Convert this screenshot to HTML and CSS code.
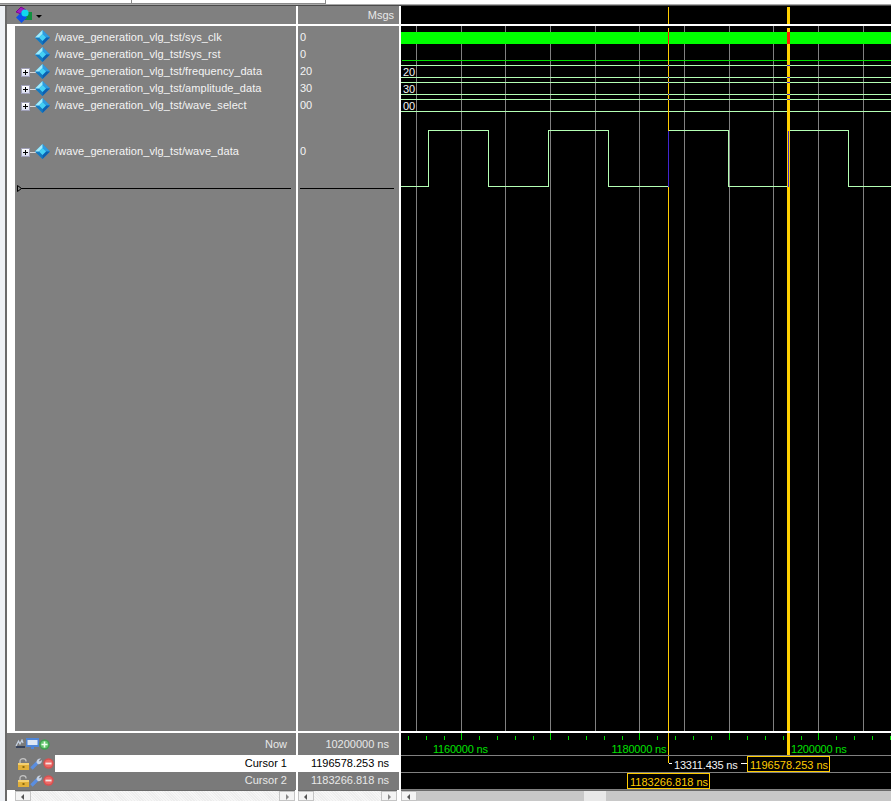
FILE: index.html
```html
<!DOCTYPE html>
<html lang="en">
<head>
<meta charset="utf-8">
<title>Wave</title>
<link rel="stylesheet" href="styles.css">
</head>
<body>
<svg class="defs" width="0" height="0" aria-hidden="true">
  <defs>
    <symbol id="sig" viewBox="0 0 15 15">
      <path d="M7.500 0L15 7.500 7.500 15 0 7.500z" fill="#1a8fd8"/>
      <path d="M7.500 0L15 7.500H11L7.500 4z" fill="#2f9ae0"/>
      <path d="M0 7.500L7.500 15V11L4 7.500z" fill="#1479c0"/>
      <path d="M7.500 15L15 7.500H11L7.500 11z" fill="#0d5fb0"/>
      <path d="M7.500 0L0 7.500H4L7.500 4z" fill="#a0ecfc"/>
      <path d="M7.500 4L11 7.500 7.500 11 4 7.500z" fill="#45d0f4"/>
    </symbol>
    <symbol id="lock" viewBox="0 0 11 12">
      <path d="M2 5V3C2 1.500 3.500 .7 5 .7S8 1.500 8 3V3.500" fill="none" stroke="#c4c4c4" stroke-width="1.300"/>
      <rect x="0" y="5" width="11" height="7" fill="#e2b038"/>
      <rect x="0" y="5" width="11" height="2" fill="#f4d070"/>
      <rect x="4.500" y="8" width="2" height="2" fill="#8a6a10"/>
    </symbol>
    <symbol id="wrench" viewBox="0 0 12 12">
      <path d="M1.500 10.500L7.500 4.500" stroke="#5a8ee0" stroke-width="3.200" fill="none"/>
      <path d="M6.500 4.500C6.300 2 8.500 0 11 .6L9 2.600 9.800 3.600 11.800 2C12.200 5 10 6.800 7.800 6z" fill="#c4d0e2"/>
    </symbol>
    <symbol id="minus" viewBox="0 0 11 11">
      <circle cx="5.500" cy="5.500" r="5.200" fill="#d95050"/>
      <circle cx="5.500" cy="5.500" r="3.800" fill="#ec6a66"/>
      <rect x="2.500" y="4.600" width="6" height="1.800" fill="#f8e4e4"/>
    </symbol>
  </defs>
</svg>

<div class="app">
  <div class="tabs">
    <div class="tab tab-a"></div>
    <div class="tab tab-b"></div>
    <div class="tab tab-c"></div>
  </div>
  <div class="panes">
    <section class="col col-names">
      <div class="head">
        <svg class="head-icon" width="18" height="18" viewBox="0 0 18 18">
          <path d="M1 6L6 1l5 3-5 4z" fill="#a020c0" stroke="#800090"/>
          <rect x="8" y="6" width="9" height="8" fill="#109040"/>
          <path d="M6.500 6L12 11.500 6.500 17 1 11.500z" fill="#1050e8"/>
          <circle cx="10" cy="7" r="3.600" fill="#10d8f0"/>
        </svg>
        <span class="caret"></span>
      </div>
      <div class="list">
        <div class="gutter"></div>
        <div class="rows">
          <div class="row"><svg class="sig"><use href="#sig"/></svg><span class="name">/wave_generation_vlg_tst/sys_clk</span></div>
          <div class="row"><svg class="sig"><use href="#sig"/></svg><span class="name">/wave_generation_vlg_tst/sys_rst</span></div>
          <div class="row"><span class="exp"><span class="conn"></span></span><svg class="sig"><use href="#sig"/></svg><span class="name">/wave_generation_vlg_tst/frequency_data</span></div>
          <div class="row"><span class="exp"><span class="conn"></span></span><svg class="sig"><use href="#sig"/></svg><span class="name">/wave_generation_vlg_tst/amplitude_data</span></div>
          <div class="row"><span class="exp"><span class="conn"></span></span><svg class="sig"><use href="#sig"/></svg><span class="name">/wave_generation_vlg_tst/wave_select</span></div>
          <div class="row row-tall"><span class="exp"><span class="conn"></span></span><svg class="sig"><use href="#sig"/></svg><span class="name">/wave_generation_vlg_tst/wave_data</span></div>
          <div class="sep sep-names"><svg class="tri" width="5" height="7" viewBox="0 0 5 7"><path d="M.5 .5L4.500 3.500 .5 6.500z" fill="#808080" stroke="#000"/></svg></div>
        </div>
      </div>
      <div class="foot">
        <div class="foot-row now">
          <span class="now-icons">
            <svg width="11" height="10" viewBox="0 0 11 10"><path d="M1 8H10" stroke="#203050" stroke-width="1.500"/><path d="M1 7L3.500 2 5 5 7 1 8 4" fill="none" stroke="#c8d4e4" stroke-width="1.200"/></svg>
            <svg width="13" height="12" viewBox="0 0 13 12"><rect width="13" height="9" fill="#4f86d8"/><rect x="1.500" y="2" width="10" height="5" fill="#dfe8f4"/><rect x="5" y="9" width="3" height="2" fill="#4f86d8"/></svg>
            <svg width="11" height="11" viewBox="0 0 11 11"><circle cx="5.500" cy="5.500" r="5.200" fill="#3fa050"/><circle cx="5.500" cy="5.500" r="3.800" fill="#66c870"/><path d="M5.500 2.500V8.500M2.500 5.500H8.500" stroke="#f0fff0" stroke-width="1.600"/></svg>
          </span>
          <span class="foot-label">Now</span>
        </div>
        <div class="foot-row cur">
          <span class="cur-icons"><svg class="i-lock"><use href="#lock"/></svg><svg class="i-wrench"><use href="#wrench"/></svg><svg class="i-minus"><use href="#minus"/></svg></span>
          <span class="foot-label selected">Cursor 1</span>
        </div>
        <div class="foot-row cur">
          <span class="cur-icons"><svg class="i-lock"><use href="#lock"/></svg><svg class="i-wrench"><use href="#wrench"/></svg><svg class="i-minus"><use href="#minus"/></svg></span>
          <span class="foot-label">Cursor 2</span>
        </div>
      </div>
      <div class="scroll scroll-names"><span class="btn btn-l"></span><span class="track"></span><span class="btn btn-r"></span></div>
    </section>

    <section class="col col-msgs">
      <div class="head head-msgs">Msgs</div>
      <div class="list">
        <div class="rows">
          <div class="row val">0</div>
          <div class="row val">0</div>
          <div class="row val">20</div>
          <div class="row val">30</div>
          <div class="row val">00</div>
          <div class="row row-tall val">0</div>
          <div class="sep sep-msgs"></div>
        </div>
      </div>
      <div class="foot">
        <div class="foot-row now"><span class="foot-label">10200000 ns</span></div>
        <div class="foot-row cur"><span class="foot-label selected">1196578.253 ns</span></div>
        <div class="foot-row cur"><span class="foot-label">1183266.818 ns</span></div>
      </div>
      <div class="scroll scroll-msgs"><span class="btn btn-l"></span><span class="track"></span><span class="btn btn-r"></span></div>
    </section>

    <section class="col col-wave">
      <svg class="canvas" width="490" height="784" viewBox="401 6 490 784" shape-rendering="crispEdges">
        <rect class="bar" x="401" y="24" width="490" height="2"/>
        <rect class="bar" x="401" y="731" width="490" height="2"/>
        <path class="grid" d="M416.500 26V731M461.500 26V731M505.500 26V731M550.500 26V731M595.500 26V731M639.500 26V731M684.500 26V731M729.500 26V731M773.500 26V731M818.500 26V731M863.500 26V731"/>
        <rect class="clk" x="401" y="32" width="490" height="12"/>
        <path class="rst" d="M402 60.500H891"/>
        <path class="bus" d="M401 65.500H891M401 77.500H891M401 82.500H891M401 94.500H891M401 99.500H891M401 111.500H891"/>
        <path class="bus" d="M401 186.500H428.500V130.500H488.500V186.500H548.500V130.500H608.500V186.500H668.500V130.500H728.500V186.500H788.500V130.500H848.500V186.500H891"/>
        <path class="cur1" d="M668.500 7V24M668.500 28V731M668.500 733V763"/>
        <path class="cur2" d="M788.500 7V24M788.500 28V731M788.500 733V755"/>
        <rect class="red" x="668" y="32" width="1" height="12"/>
        <rect class="red" x="787" y="32" width="3" height="12"/>
        <path class="cross" d="M668.500 130.500V186.500M788.500 130.500V186.500M787 65.500H790M787 77.500H790M787 82.500H790M787 94.500H790M787 99.500H790M668 65.500H669M668 77.500H669M668 82.500H669M668 94.500H669M668 99.500H669"/>
        <rect class="hit" x="402" y="66" width="14" height="11"/>
        <rect class="hit" x="402" y="83" width="14" height="11"/>
        <rect class="hit" x="402" y="100" width="14" height="11"/>
        <text class="t tw" x="403" y="76">20</text>
        <text class="t tw" x="403" y="93">30</text>
        <text class="t tw" x="403" y="110">00</text>
        <path class="tick" d="M408.500 736V740M426.500 736V740M444.500 736V740M479.500 736V740M497.500 736V740M515.500 736V740M533.500 736V740M568.500 736V740M586.500 736V740M604.500 736V740M622.500 736V740M657.500 736V740M675.500 736V740M693.500 736V740M711.500 736V740M747.500 736V740M765.500 736V740M783.500 736V740M801.500 736V740M836.500 736V740M854.500 736V740M872.500 736V740M890.500 736V740M461.500 733V740M550.500 733V740M639.500 733V740M729.500 733V740M818.500 733V740"/>
        <text class="t tg" x="433" y="753">1160000 ns</text>
        <text class="t tg" x="611.500" y="753">1180000 ns</text>
        <text class="t tg" x="791" y="753">1200000 ns</text>
        <path class="grid" d="M401 755.500H891M401 772.500H891M401 789.500H891"/>
        <path class="dash" d="M669 763.500H672M741 763.500H747"/>
        <text class="t tw tn" x="674" y="769">13311.435 ns</text>
        <rect class="box" x="747.500" y="756.500" width="82" height="15"/>
        <text class="t ty" x="750" y="769">1196578.253 ns</text>
        <rect class="box" x="627.500" y="773.500" width="82" height="15"/>
        <text class="t ty" x="630" y="786">1183266.818 ns</text>
      </svg>
      <div class="scroll scroll-wave"><span class="btn btn-l"></span><span class="thumb thumb-a"></span><span class="handle"></span><span class="thumb thumb-b"></span></div>
    </section>
  </div>
</div>
</body>
</html>
```

FILE: styles.css
```css
* { box-sizing: border-box; }
html, body { margin: 0; padding: 0; background: #f0f0f0; }
.defs { position: absolute; }
.app {
  width: 891px; height: 801px; overflow: hidden;
  display: flex; flex-direction: column;
  font: 11px "Liberation Sans", Arial, sans-serif; color: #f4f4f4;
}
.tabs { height: 5px; flex: none; display: flex; background: #fff; border-bottom: 1px solid #a8a8a8; }
.tab { height: 4px; border-right: 1px solid #8a8a8a; border-bottom: 1px solid #8a8a8a; }
.tab-a { width: 132px; }
.tab-b { width: 194px; }
.tab-c { flex: 1; border: 0; }
.panes {
  flex: 1; display: flex; gap: 2px;
  background: #fff; padding-left: 5px;
  border-top: 1px solid #4a4a4a; min-height: 0;
  position: relative;
}
.panes::before {
  content: ""; position: absolute; left: 0; top: 0; bottom: 0; width: 5px; background: #eef1f5;
}
.col { display: flex; flex-direction: column; min-width: 0; }
.col-names { width: 291px; border-left: 2px solid #6a6a6a; }
.col-msgs { width: 101px; }
.col-wave { width: 490px; }

.head { height: 18px; background: #808080; display: flex; align-items: center; padding-left: 8px; flex: none; }
.head-icon { flex: none; }
.caret { width: 0; height: 0; margin: 2px 0 0 3px; border-style: solid; border-color: #000 transparent transparent; border-width: 3px 3px 0; }
.head-msgs { justify-content: flex-end; padding: 0 5px 0 0; color: #e8e8e8; }

.list { flex: 1; margin: 2px 0; display: flex; min-height: 0; background: #808080; }
.gutter { width: 8px; background: #fff; flex: none; }
.rows { flex: 1; padding-top: 2px; min-width: 0; position: relative; }
.row { height: 17px; display: flex; align-items: center; position: relative; white-space: nowrap; }
.col-names .row { padding-left: 40px; }
.row-tall { height: 76px; }
.val { padding-left: 2px; }
.sig { width: 15px; height: 15px; position: absolute; left: 20px; top: 2px; }
.row-tall .sig { top: 31px; }
.name { letter-spacing: 0.09px; }
.exp {
  position: absolute; left: 6px; top: 6px; width: 9px; height: 9px;
  background: linear-gradient(#fff, #d8dcf0); border: 1px solid #a0a0b8;
}
.row-tall .exp { top: 35px; }
.exp::before { content: ""; position: absolute; left: 1px; top: 3px; width: 5px; height: 1px; background: #000; }
.exp::after { content: ""; position: absolute; left: 3px; top: 1px; width: 1px; height: 5px; background: #000; }
.conn { position: absolute; left: 8px; top: 3px; width: 6px; height: 1px; background: #d8d8d8; }
.sep { height: 1px; background: #000; position: absolute; top: 162px; }
.sep-names { left: 2px; right: 5px; }
.sep-msgs { left: 2px; right: 5px; }
.tri { position: absolute; left: 0; top: -3px; display: block; }

.foot { height: 57px; flex: none; background: #7a7a7a; }
.foot-row { display: flex; align-items: center; justify-content: flex-end; height: 17px; position: relative; }
.foot-row.now { height: 22px; }
.foot-label { padding-right: 10px; color: #e8e8e8; flex: 1; text-align: right; line-height: 17px; }
.selected { background: #fff; color: #000; }
.col-names .foot-row.cur .foot-label { margin-left: 48px; }
.col-names .foot-label { padding-right: 9px; }
.now-icons { display: flex; align-items: center; margin-left: 8px; gap: 0; flex: none; }
.now-icons svg { flex: none; }
.cur-icons { position: absolute; left: 11px; top: 3px; display: flex; align-items: flex-start; gap: 1px; }
.i-lock { width: 11px; height: 12px; flex: none; }
.i-wrench { width: 12px; height: 12px; flex: none; }
.i-minus { width: 11px; height: 11px; flex: none; }

.scroll { flex: none; height: 11px; display: flex; border-top: 1px solid #6a6a6a; background: #f2f2f2; }
.btn { width: 16px; background: #f4f4f4; border: 1px solid #c4c4c4; position: relative; flex: none; }
.btn-l::after { content: ""; position: absolute; left: 5px; top: 2px; border: 3px solid transparent; border-right-color: #555; border-left: 0; }
.btn-r::after { content: ""; position: absolute; left: 6px; top: 2px; border: 3px solid transparent; border-left-color: #888; border-right: 0; }
.track { flex: 1; background: repeating-linear-gradient(45deg, #f6f6f6 0 1px, #ededed 1px 2px); }
.scroll-names { margin-left: 8px; margin-right: 1px; }
.scroll-msgs { margin-right: 2px; }
.thumb { background: #c8c8c8; }
.thumb-a { width: 167px; }
.handle { width: 22px; background: #e8e8e8; }
.thumb-b { flex: 1; }

.canvas { display: block; flex: none; background: #000; }
.bar { fill: #fff; }
.grid { stroke: #808080; stroke-width: 1; fill: none; }
.clk { fill: #0f0; }
.rst { stroke: #00e000; fill: none; }
.bus { stroke: #b4ffb4; fill: none; }
.cur1 { stroke: #ffcc00; stroke-width: 1; fill: none; }
.cur2 { stroke: #ffd000; stroke-width: 3; fill: none; }
.red { fill: #ff2000; }
.cross { stroke: #4028d0; fill: none; }
.hit { fill: #000; }
.tick { stroke: #00d800; fill: none; }
.dash { stroke: #fff; fill: none; }
.box { fill: #000; stroke: #ffcc00; }
.t { font: 11px "Liberation Sans", Arial, sans-serif; }
.tw { fill: #f4f4f4; }
.tn { letter-spacing: -0.2px; }
.tg { fill: #00e000; letter-spacing: -0.2px; }
.ty { fill: #ffcc00; }
```
